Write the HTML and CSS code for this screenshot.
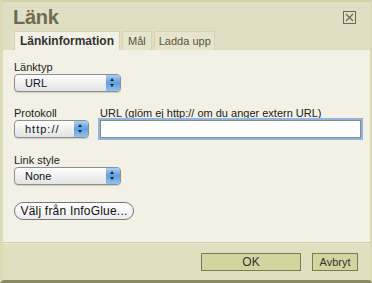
FILE: index.html
```html
<!DOCTYPE html>
<html lang="sv">
<head>
<meta charset="utf-8">
<link rel="stylesheet" href="styles.css">
</head>
<body>
<div class="dialog">
  <div class="header">
    <div class="title-row">
      <h1 class="title">Länk</h1>
      <span class="close"><svg width="13" height="13" viewBox="0 0 13 13"><rect x="0.5" y="0.5" width="12" height="12" fill="none" stroke="#6b6b55"/><path d="M3 3L10 10M10 3L3 10" stroke="#6b6b55" stroke-width="1.2"/></svg></span>
    </div>
    <div class="tabs">
      <span class="tab active">Länkinformation</span>
      <span class="tab">Mål</span>
      <span class="tab">Ladda upp</span>
    </div>
  </div>
  <div class="content">
    <div class="field">
      <label class="label">Länktyp</label>
      <div class="select wide"><span>URL</span><span class="arrows"></span></div>
    </div>
    <div class="row">
      <div class="field">
        <label class="label">Protokoll</label>
        <div class="select narrow"><span>http://</span><span class="arrows"></span></div>
      </div>
      <div class="field grow">
        <label class="label">URL (glöm ej http:// om du anger extern URL)</label>
        <div class="input"></div>
      </div>
    </div>
    <div class="field style-field">
      <label class="label">Link style</label>
      <div class="select wide"><span>None</span><span class="arrows"></span></div>
    </div>
    <div class="pill">Välj från InfoGlue...</div>
  </div>
  <div class="footer">
    <span class="btn ok">OK</span>
    <span class="btn cancel">Avbryt</span>
  </div>
</div>
</body>
</html>
```
FILE: styles.css
```css
* { box-sizing: border-box; }
html, body { margin: 0; padding: 0; }
body {
  width: 372px; height: 283px; overflow: hidden;
  font-family: "Liberation Sans", Arial, sans-serif;
  font-size: 11px; color: #111;
  background: #e1dfc2;
}
.dialog {
  width: 372px; height: 283px;
  display: flex; flex-direction: column;
  border-top: 2px solid #d3d2a6;
  border-left: 3px solid #dcdbb4;
  border-right: 2px solid #dcdbb4;
  border-bottom: 3px solid #8a8a62;
  background: #e1dfc3;
}
.header { padding: 0 0 0 11px; }
.title-row { display: flex; justify-content: space-between; align-items: flex-start; height: 29px; }
.title {
  margin: 0 0 0 -1px; padding-top: 3px; line-height: 24px;
  font-size: 20px; font-weight: bold; color: #6d6c52; letter-spacing: -0.3px;
}
.close { margin: 9px 14px 0 0; display: flex; }
.tabs { display: flex; gap: 2px; height: 19px; align-items: flex-end; }
.tab {
  height: 19px; padding: 3px 5px 0;
  background: #e6e4ca; border: 1px solid #d5d3b2; border-bottom: none;
  color: #55553d; font-size: 11px;
}
.tab:last-child { padding: 3px 3px 0 4px; }
.tab.active { background: #f3f1e5; color: #333; font-weight: bold; font-size: 12px; padding: 2px 5px 0; }
.content {
  flex: 1; background: #f3f1e5;
  display: flex; flex-direction: column;
  padding: 10px 9px 0 11px;
  border-bottom: 1px solid #cfcda8;
}
.field { display: flex; flex-direction: column; }
.label { height: 14px; line-height: 14px; color: #222; }
.row { display: flex; gap: 11px; margin-top: 14px; }
.grow { flex: 1; }
.select {
  height: 18px;
  display: flex; justify-content: space-between; align-items: center;
  border: 1px solid #8e8e8e; border-radius: 4px;
  background: linear-gradient(#ffffff, #f0f0f0 50%, #e4e4e4);
  padding-left: 10px; font-size: 11px;
  box-shadow: 0 1px 1px rgba(0,0,0,0.15);
}
.wide { width: 107px; }
.narrow { width: 75px; letter-spacing: 1px; }
.arrows {
  width: 14px; height: 16px; border-radius: 0 3px 3px 0;
  background: linear-gradient(#a9cff1, #5f9fdd 50%, #8fc3ef);
  position: relative;
}
.arrows::before, .arrows::after {
  content: ""; position: absolute; left: 4px;
  border-left: 2.5px solid transparent; border-right: 2.5px solid transparent;
}
.arrows::before { top: 3px; border-bottom: 3px solid #222; }
.arrows::after { top: 9px; border-top: 3px solid #222; }
.input {
  height: 18px;
  background: #fff; border: 1px solid #8a8a8a;
  box-shadow: 0 0 0 2px #8db6e0;
}
.style-field { margin-top: 15px; }
.pill {
  align-self: flex-start; width: 120px; margin-top: 17px;
  height: 18px; line-height: 16px; text-align: center;
  border: 1px solid #777; border-radius: 9px;
  background: linear-gradient(#ffffff, #ececec);
  font-size: 12px; letter-spacing: 0.2px;
}
.footer {
  height: 37px; display: flex; justify-content: flex-end; align-items: flex-start;
  gap: 11px; padding: 9px 12px 0 0;
  border-top: 1px solid #e9e7d0;
  background: #e0dfc0;
}
.btn {
  height: 18px; line-height: 16px; text-align: center;
  background: #d4d49f; border: 1px solid #7b7b52;
  color: #333; font-size: 12px;
}
.ok { width: 100px; }
.cancel { width: 46px; font-size: 11px; }
```
